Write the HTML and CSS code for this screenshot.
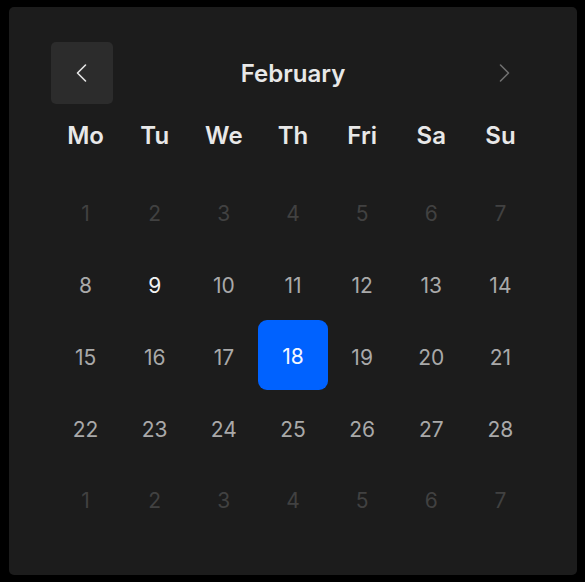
FILE: index.html
```html
<!DOCTYPE html>
<html>
<head>
<meta charset="utf-8">
<link rel="stylesheet" href="styles.css">
</head>
<body>
<div class="card">
  <div class="header">
    <button class="nav nav-prev" aria-label="Previous month">
      <svg width="24" height="24" viewBox="0 0 24 24"><path d="M15.5 4 L7.5 12 L15.5 20" fill="none" stroke="currentColor" stroke-width="1.6" stroke-linecap="round" stroke-linejoin="round"/></svg>
    </button>
    <div class="title">February</div>
    <button class="nav nav-next" aria-label="Next month">
      <svg width="24" height="24" viewBox="0 0 24 24"><path d="M8.5 4 L16.5 12 L8.5 20" fill="none" stroke="currentColor" stroke-width="1.6" stroke-linecap="round" stroke-linejoin="round"/></svg>
    </button>
  </div>
  <div class="weekdays">
    <div>Mo</div><div>Tu</div><div>We</div><div>Th</div><div>Fri</div><div>Sa</div><div>Su</div>
  </div>
  <div class="days">
    <div class="day muted">1</div><div class="day muted">2</div><div class="day muted">3</div><div class="day muted">4</div><div class="day muted">5</div><div class="day muted">6</div><div class="day muted">7</div>
    <div class="day">8</div><div class="day bright">9</div><div class="day">10</div><div class="day">11</div><div class="day">12</div><div class="day">13</div><div class="day">14</div>
    <div class="day">15</div><div class="day">16</div><div class="day">17</div><div class="day selected">18</div><div class="day">19</div><div class="day">20</div><div class="day">21</div>
    <div class="day">22</div><div class="day">23</div><div class="day">24</div><div class="day">25</div><div class="day">26</div><div class="day">27</div><div class="day">28</div>
    <div class="day muted">1</div><div class="day muted">2</div><div class="day muted">3</div><div class="day muted">4</div><div class="day muted">5</div><div class="day muted">6</div><div class="day muted">7</div>
  </div>
</div>
</body>
</html>
```

FILE: styles.css
```css
html, body {
  margin: 0;
  padding: 0;
  background: #000;
}
body {
  padding: 7px 8px 7px 9px;
  font-family: Inter, "Noto Sans", sans-serif;
}
.card {
  width: 568px;
  height: 568px;
  box-sizing: border-box;
  background: #1c1c1c;
  border-radius: 5px;
  padding: 35px 42px 40px 42px;
}
.header {
  display: flex;
  align-items: center;
  justify-content: space-between;
  height: 62px;
}
.nav {
  width: 62px;
  height: 62px;
  border: none;
  border-radius: 5px;
  background: transparent;
  display: flex;
  align-items: center;
  justify-content: center;
  padding: 0;
}
.nav-prev {
  background: #2c2c2c;
  color: #e6e6e6;
}
.nav-next {
  color: #707070;
}
.title {
  color: #e8e8e8;
  font-size: 24px;
  font-weight: 600;
}
.weekdays {
  display: grid;
  grid-template-columns: repeat(7, 1fr);
  height: 62px;
  align-items: center;
  text-align: center;
  color: #e8e8e8;
  font-size: 24px;
  font-weight: 600;
  margin-bottom: 12px;
}
.days {
  display: grid;
  grid-template-columns: repeat(7, 1fr);
  grid-auto-rows: 71.75px;
}
.day {
  display: flex;
  align-items: center;
  justify-content: center;
  font-size: 21px;
  color: #a9a9a9;
}
.day.muted {
  color: #414141;
}
.day.bright {
  color: #f2f2f2;
}
.day.selected {
  background: #0062ff;
  color: #f4f7ff;
  border-radius: 9px;
  margin: -2px 0 3.75px;
  padding-top: 4px;
  box-sizing: border-box;
}
```
